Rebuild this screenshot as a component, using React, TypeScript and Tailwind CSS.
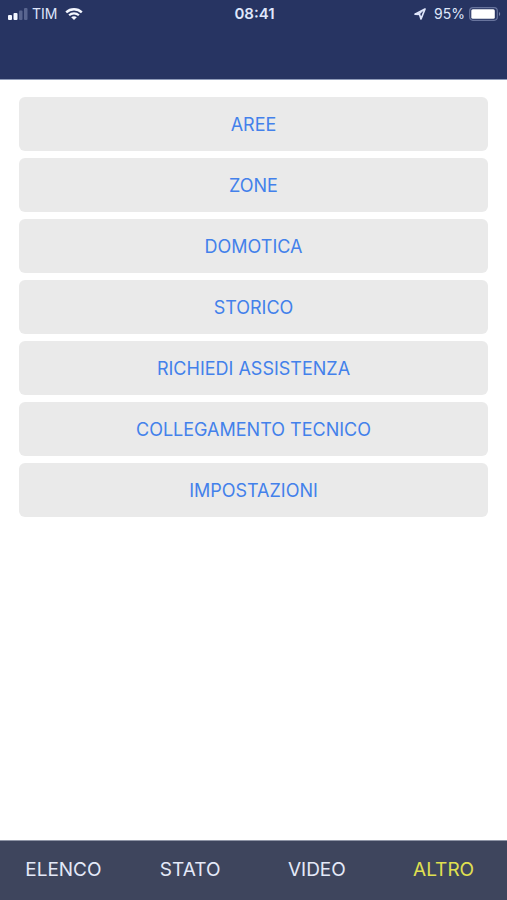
const menuItems = [
  'AREE',
  'ZONE',
  'DOMOTICA',
  'STORICO',
  'RICHIEDI ASSISTENZA',
  'COLLEGAMENTO TECNICO',
  'IMPOSTAZIONI',
];

const tabs = ['ELENCO', 'STATO', 'VIDEO', 'ALTRO'];

function StatusBar() {
  return (
    <div className="grid h-7 grid-cols-3 items-center pr-1.5 pl-2 text-sm text-[#dfe6fb]">
      <div className="flex items-center gap-1">
        <svg className="h-3 w-5" viewBox="0 0 20 12" aria-hidden="true">
          <rect x="0" y="7" width="4" height="5" rx="1" fill="#f4f7ff" />
          <rect x="5.5" y="5" width="4" height="7" rx="1" fill="#f4f7ff" />
          <rect x="11" y="2.5" width="3.5" height="9.5" rx="1" fill="#59658f" />
          <rect x="16" y="0" width="3.5" height="12" rx="1" fill="#59658f" />
        </svg>
        <span>TIM</span>
        <svg className="ml-1 h-3 w-[18px]" viewBox="0 0 18 12" fill="none" aria-hidden="true">
          <path d="M1.2 4.4C5.6.2 12.4.2 16.8 4.4" stroke="#f4f7ff" strokeWidth="2.4" />
          <path d="M4.1 7.3C6.9 4.7 11.1 4.7 13.9 7.3" stroke="#f4f7ff" strokeWidth="2.2" />
          <path d="M6.2 9.3C7.8 7.8 10.2 7.8 11.8 9.3L9 12Z" fill="#f4f7ff" />
        </svg>
      </div>
      <span className="text-center text-[15px] font-semibold">08:41</span>
      <div className="flex items-center justify-end">
        <svg className="mr-2 h-3 w-3" viewBox="0 0 12 12" fill="none" aria-hidden="true">
          <path
            d="M11 1L1 6.2L5.6 6.5L7 11Z"
            stroke="#dfe6fb"
            strokeWidth="1.7"
            strokeLinejoin="round"
          />
          <path d="M11 1L5.6 6.5L1 6.2L5 4.8Z" fill="#dfe6fb" />
        </svg>
        <span className="mr-1">95%</span>
        <svg className="h-[14px] w-8" viewBox="0 0 32 14" fill="none" aria-hidden="true">
          <rect x="0.7" y="0.7" width="27.6" height="12.6" rx="3.2" stroke="#68749d" strokeWidth="1.2" />
          <rect x="2.3" y="2.3" width="23.5" height="9.4" rx="1.5" fill="#ffffff" />
          <path d="M30 5V9C31.6 8.5 31.6 5.5 30 5Z" fill="#7883a8" />
        </svg>
      </div>
    </div>
  );
}

export default function App() {
  return (
    <div className="flex min-h-screen flex-col bg-white font-['Inter','Liberation_Sans',sans-serif]">
      <header className="h-20 border-b border-[#8f9bb9] bg-[#273462]">
        <StatusBar />
      </header>

      <main className="flex flex-1 flex-col gap-[7px] px-[19px] pt-[17px] pb-6">
        {menuItems.map((item) => (
          <button
            key={item}
            type="button"
            className="h-[54px] w-full rounded-md bg-[#eaeaea] pt-px text-[18px] text-[#4381eb]"
          >
            {item}
          </button>
        ))}
      </main>

      <nav className="grid h-[60px] grid-cols-4 border-t border-[#8f95a6] bg-[#3e455d]">
        {tabs.map((tab) => (
          <button
            key={tab}
            type="button"
            aria-current={tab === 'ALTRO' ? 'page' : undefined}
            className="text-[19px] text-[#e4e9f8] aria-[current=page]:text-[#e0e050]"
          >
            {tab}
          </button>
        ))}
      </nav>
    </div>
  );
}
